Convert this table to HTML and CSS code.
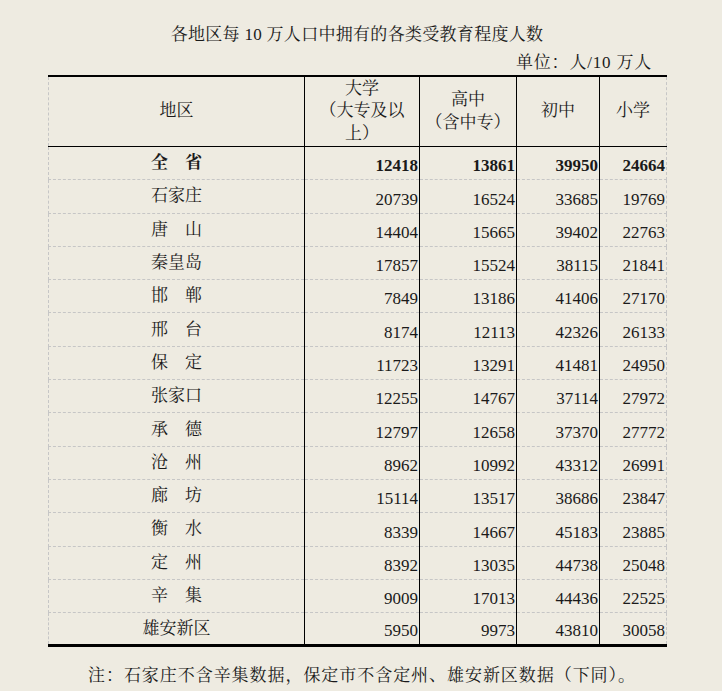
FILE: index.html
```html
<!DOCTYPE html>
<html lang="zh-CN">
<head>
<meta charset="utf-8">
<title>各地区每10万人口中拥有的各类受教育程度人数</title>
<link rel="stylesheet" href="styles.css">
</head>
<body>
<div class="sheet">
  <h1 class="title">各地区每 10 万人口中拥有的各类受教育程度人数</h1>
  <div class="unit">单位：人/10 万人</div>
  <table class="data">
    <colgroup>
      <col class="c-region">
      <col class="c-univ">
      <col class="c-high">
      <col class="c-mid">
      <col class="c-prim">
    </colgroup>
    <thead>
      <tr>
        <th>地区</th>
        <th>大学<br>（大专及以<br>上）</th>
        <th>高中<br>（含中专）</th>
        <th>初中</th>
        <th>小学</th>
      </tr>
    </thead>
    <tbody>
      <tr class="total"><td class="name">全　省</td><td class="num">12418</td><td class="num">13861</td><td class="num">39950</td><td class="num">24664</td></tr>
      <tr><td class="name">石家庄</td><td class="num">20739</td><td class="num">16524</td><td class="num">33685</td><td class="num">19769</td></tr>
      <tr><td class="name">唐　山</td><td class="num">14404</td><td class="num">15665</td><td class="num">39402</td><td class="num">22763</td></tr>
      <tr><td class="name">秦皇岛</td><td class="num">17857</td><td class="num">15524</td><td class="num">38115</td><td class="num">21841</td></tr>
      <tr><td class="name">邯　郸</td><td class="num">7849</td><td class="num">13186</td><td class="num">41406</td><td class="num">27170</td></tr>
      <tr><td class="name">邢　台</td><td class="num">8174</td><td class="num">12113</td><td class="num">42326</td><td class="num">26133</td></tr>
      <tr><td class="name">保　定</td><td class="num">11723</td><td class="num">13291</td><td class="num">41481</td><td class="num">24950</td></tr>
      <tr><td class="name">张家口</td><td class="num">12255</td><td class="num">14767</td><td class="num">37114</td><td class="num">27972</td></tr>
      <tr><td class="name">承　德</td><td class="num">12797</td><td class="num">12658</td><td class="num">37370</td><td class="num">27772</td></tr>
      <tr><td class="name">沧　州</td><td class="num">8962</td><td class="num">10992</td><td class="num">43312</td><td class="num">26991</td></tr>
      <tr><td class="name">廊　坊</td><td class="num">15114</td><td class="num">13517</td><td class="num">38686</td><td class="num">23847</td></tr>
      <tr><td class="name">衡　水</td><td class="num">8339</td><td class="num">14667</td><td class="num">45183</td><td class="num">23885</td></tr>
      <tr><td class="name">定　州</td><td class="num">8392</td><td class="num">13035</td><td class="num">44738</td><td class="num">25048</td></tr>
      <tr><td class="name">辛　集</td><td class="num">9009</td><td class="num">17013</td><td class="num">44436</td><td class="num">22525</td></tr>
      <tr class="last"><td class="name">雄安新区</td><td class="num">5950</td><td class="num">9973</td><td class="num">43810</td><td class="num">30058</td></tr>
    </tbody>
  </table>
  <p class="note">注：石家庄不含辛集数据，保定市不含定州、雄安新区数据（下同）。</p>
</div>
</body>
</html>
```
FILE: styles.css
```css
html, body {
  margin: 0;
  padding: 0;
  background: #eeebe1;
}
body {
  font-family: "Liberation Serif", "Noto Serif CJK SC", "Noto Sans CJK SC", serif;
  font-size: 17px;
  color: #1a1a1a;
}
.sheet {
  width: 618px;
  margin-left: 48px;
  padding-top: 24px;
}
.title {
  margin: 0;
  font-size: 17px;
  font-weight: normal;
  line-height: 22px;
  text-align: center;
  letter-spacing: 0.3px;
}
.unit {
  margin-top: 6px;
  line-height: 22px;
  text-align: right;
  padding-right: 14px;
  letter-spacing: 0.8px;
}
.data {
  width: 618px;
  table-layout: fixed;
  border-collapse: collapse;
  margin-top: 1px;
}
.c-region { width: 256px; }
.c-univ { width: 115px; }
.c-high { width: 97px; }
.c-mid { width: 83px; }
.c-prim { width: 67px; }
.data th,
.data td {
  padding: 0;
  border-left: 1px solid #000;
  border-right: 1px solid #000;
  border-bottom: 1px dashed #c6c6c6;
}
.data th:first-child,
.data td:first-child {
  border-left: 1px dashed #c6c6c6;
}
.data th:last-child,
.data td:last-child {
  border-right: 1px dashed #c6c6c6;
}
.data thead tr {
  border-top: 2px solid #000;
}
.data th {
  height: 69px;
  font-weight: normal;
  line-height: 22.5px;
  text-align: center;
  vertical-align: middle;
  border-bottom: 1px solid #000;
}
.data tbody tr {
  height: 33.3px;
}
.data .name {
  text-align: center;
  vertical-align: middle;
  line-height: 22px;
}
.data .num {
  text-align: right;
  vertical-align: bottom;
  padding-right: 1px;
  padding-bottom: 3px;
  line-height: 20px;
}
.data .total td {
  font-weight: bold;
}
.data tr.last td {
  border-bottom: 3px solid #000;
}
.note {
  margin: 18px 0 0 40px;
  line-height: 22px;
  letter-spacing: 0.95px;
}
```
